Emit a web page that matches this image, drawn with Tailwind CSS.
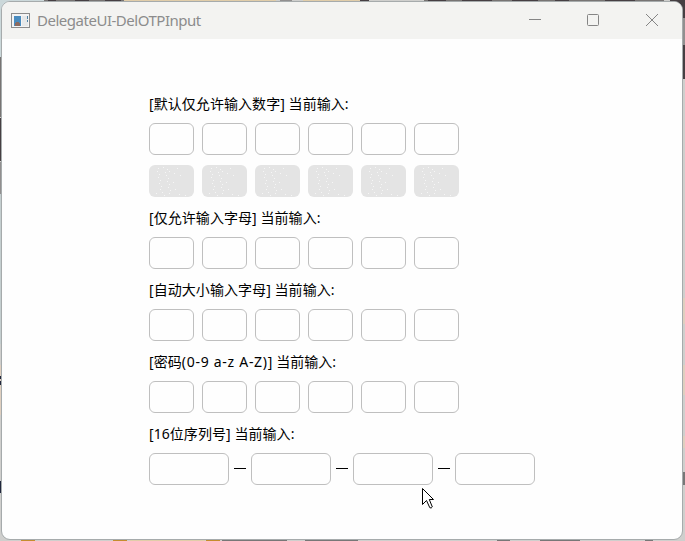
<!DOCTYPE html>
<html lang="zh-CN">
<head>
<meta charset="utf-8">
<title>DelegateUI-DelOTPInput</title>
<script src="https://cdn.jsdelivr.net/npm/@tailwindcss/browser@4"></script>
</head>
<body class="relative w-[685px] h-[541px] overflow-hidden bg-[#cfcfcd] pl-px pt-px font-['Noto_Sans','Noto_Sans_CJK_SC',sans-serif]">
  <!-- desktop wallpaper visible around the window -->
  <svg class="absolute inset-0" width="685" height="541" shape-rendering="crispEdges" aria-hidden="true">
    <rect width="685" height="541" fill="#cfcfcd"/>
    <path fill="#cbd8da" d="M0 0h44v12H0zM0 12h3v45H0z"/>
    <path fill="#777473" d="M0 57h3v60H0zM44 0h80v3H44zM424 0h240v3H424z"/>
    <path fill="#463f43" d="M0 118h3v43H0zM48 0h8v3h-8zM75 0h14v3H75zM105 0h16v3h-16zM360 0h9v3h-9zM428 0h18v3h-18zM462 0h30v3h-30zM512 0h26v3h-26zM555 0h14v3h-14zM605 0h30v3h-30zM670 0h15v18h-15zM682 45h3v34h-3z"/>
    <path fill="#918f8f" d="M0 162h3v32H0zM678 18h7v27h-7zM280 0h12v3h-12z"/>
    <path fill="#e1cda9" d="M124 0h152v3H124zM303 0h57v3h-57zM130 539h75v2h-75z"/>
    <path fill="#c4cecf" d="M0 194h3v150H0z"/>
    <path fill="#dfcfbf" d="M0 365h3v50H0zM682 298h3v26h-3zM682 365h3v30h-3zM682 436h3v12h-3z"/>
    <path fill="#20263c" d="M0 376h2v3H0zM0 381h2v4H0zM0 481h2v12H0z"/>
    <path fill="#c58c2e" d="M21 538h14v3H21zM113 538h14v3h-14zM206 538h14v3h-14z"/>
    <path fill="#777" d="M222 539h65v2h-65zM305 539h53v2h-53zM497 539h13v2h-13zM540 539h40v2h-40zM645 539h8v2h-8zM682 472h3v13h-3z"/>
  </svg>
  <main class="relative flex flex-col w-[682px] h-[539px] rounded-[9px] border border-[#a6abac] bg-[#fefefe] overflow-hidden">
    <header class="flex h-[37px] shrink-0 items-center bg-[#f3f3f1] pl-[9px] pb-px">
      <svg class="mt-px" width="19" height="15" viewBox="0 0 19 15" shape-rendering="crispEdges" aria-hidden="true">
        <rect x=".5" y=".5" width="18" height="14" fill="#f4f4f4" stroke="#8c8c8c"/>
        <rect x="3" y="3" width="7" height="10" fill="#4a8cbf"/>
        <path d="M5 9h3v1h1v3H4v-3h1z" fill="#8b6b61"/>
        <rect x="11" y="3" width="6" height="10" fill="#e6e8e9"/>
        <path d="M16 3h1v3h-1zM16 7h1v2h-1z" fill="#4e82a4"/>
      </svg>
      <h1 class="ml-[7px] w-[170px] whitespace-nowrap text-[15px] leading-5 tracking-[-0.48px] text-[#8c8c8c] font-['Noto_Sans',sans-serif]">DelegateUI-DelOTPInput</h1>
      <svg class="ml-auto mr-[23px]" width="131" height="14" fill="none" stroke="#858585" aria-hidden="true">
        <path d="M1 6.500h12"/>
        <rect x="59.500" y="1.500" width="11" height="11" rx="1"/>
        <path d="M118 1l12 12M130 1l-12 12"/>
      </svg>
    </header>
    <div class="flex flex-col pl-[147px] pt-[55px] text-sm leading-5 tracking-[0.06px] text-black">
      <p class="h-5 mb-[9px] whitespace-nowrap">[默认仅允许输入数字] 当前输入:</p>
      <div class="flex gap-2 mb-[10px]"><i class="w-[45px] h-8 rounded-md border border-[#bfbfbf]"></i><i class="w-[45px] h-8 rounded-md border border-[#bfbfbf]"></i><i class="w-[45px] h-8 rounded-md border border-[#bfbfbf]"></i><i class="w-[45px] h-8 rounded-md border border-[#bfbfbf]"></i><i class="w-[45px] h-8 rounded-md border border-[#bfbfbf]"></i><i class="w-[45px] h-8 rounded-md border border-[#bfbfbf]"></i></div>
      <!-- disabled boxes with a speckled fill -->
      <svg class="block mb-[11px]" width="310" height="32" aria-hidden="true">
        <defs>
          <g id="box">
            <rect width="45" height="32" rx="6" fill="#e4e4e4"/>
            <path shape-rendering="crispEdges" stroke="#f6f6f6" d="M9 3.500h1M14 2.500h1M18 4.500h1M8 6.500h1M16 7.500h1M20 6.500h1M10 9.500h1M17 10.500h1M25 8.500h1M9 12.500h1M19 13.500h1M11 15.500h1M18 16.500h1M31 10.500h1M10 18.500h1M20 19.500h1M12 21.500h1M19 22.500h1M26 24.500h1M11 24.500h1M21 25.500h1M13 27.500h1M20 28.500h1M15 30.500h1M30 29.500h1M36 30.500h1M7 28.500h1M24 17.500h1M28 3.500h1"/>
          </g>
        </defs>
        <use href="#box"/><use href="#box" x="53"/><use href="#box" x="106"/><use href="#box" x="159"/><use href="#box" x="212"/><use href="#box" x="265"/>
      </svg>
      <p class="h-5 mb-[9px] whitespace-nowrap">[仅允许输入字母] 当前输入:</p>
      <div class="flex gap-2 mb-[11px]"><i class="w-[45px] h-8 rounded-md border border-[#bfbfbf]"></i><i class="w-[45px] h-8 rounded-md border border-[#bfbfbf]"></i><i class="w-[45px] h-8 rounded-md border border-[#bfbfbf]"></i><i class="w-[45px] h-8 rounded-md border border-[#bfbfbf]"></i><i class="w-[45px] h-8 rounded-md border border-[#bfbfbf]"></i><i class="w-[45px] h-8 rounded-md border border-[#bfbfbf]"></i></div>
      <p class="h-5 mb-[9px] whitespace-nowrap">[自动大小输入字母] 当前输入:</p>
      <div class="flex gap-2 mb-[11px]"><i class="w-[45px] h-8 rounded-md border border-[#bfbfbf]"></i><i class="w-[45px] h-8 rounded-md border border-[#bfbfbf]"></i><i class="w-[45px] h-8 rounded-md border border-[#bfbfbf]"></i><i class="w-[45px] h-8 rounded-md border border-[#bfbfbf]"></i><i class="w-[45px] h-8 rounded-md border border-[#bfbfbf]"></i><i class="w-[45px] h-8 rounded-md border border-[#bfbfbf]"></i></div>
      <p class="h-5 mb-[9px] whitespace-nowrap">[密码<span class="tracking-[0.72px]">(0-9 a-z A-Z)</span>] 当前输入:</p>
      <div class="flex gap-2 mb-[11px]"><i class="w-[45px] h-8 rounded-md border border-[#bfbfbf]"></i><i class="w-[45px] h-8 rounded-md border border-[#bfbfbf]"></i><i class="w-[45px] h-8 rounded-md border border-[#bfbfbf]"></i><i class="w-[45px] h-8 rounded-md border border-[#bfbfbf]"></i><i class="w-[45px] h-8 rounded-md border border-[#bfbfbf]"></i><i class="w-[45px] h-8 rounded-md border border-[#bfbfbf]"></i></div>
      <p class="h-5 mb-[9px] whitespace-nowrap">[16位序列号] 当前输入:</p>
      <div class="flex items-center gap-[5px]"><i class="w-20 h-8 rounded-md border border-[#bfbfbf]"></i><i class="w-3 h-px bg-black -translate-y-px"></i><i class="w-20 h-8 rounded-md border border-[#bfbfbf]"></i><i class="w-3 h-px bg-black -translate-y-px"></i><i class="w-20 h-8 rounded-md border border-[#bfbfbf]"></i><i class="w-3 h-px bg-black -translate-y-px"></i><i class="w-20 h-8 rounded-md border border-[#bfbfbf]"></i></div>
    </div>
  </main>
  <svg class="absolute left-[422px] top-[488px]" width="12" height="21" fill="#fff" stroke="#000" aria-hidden="true">
    <path d="M.5 .5v16l4-4 3.300 7.200q1.500 1 2.500-.8L7.300 11.500h4.200z"/>
  </svg>
</body>
</html>
